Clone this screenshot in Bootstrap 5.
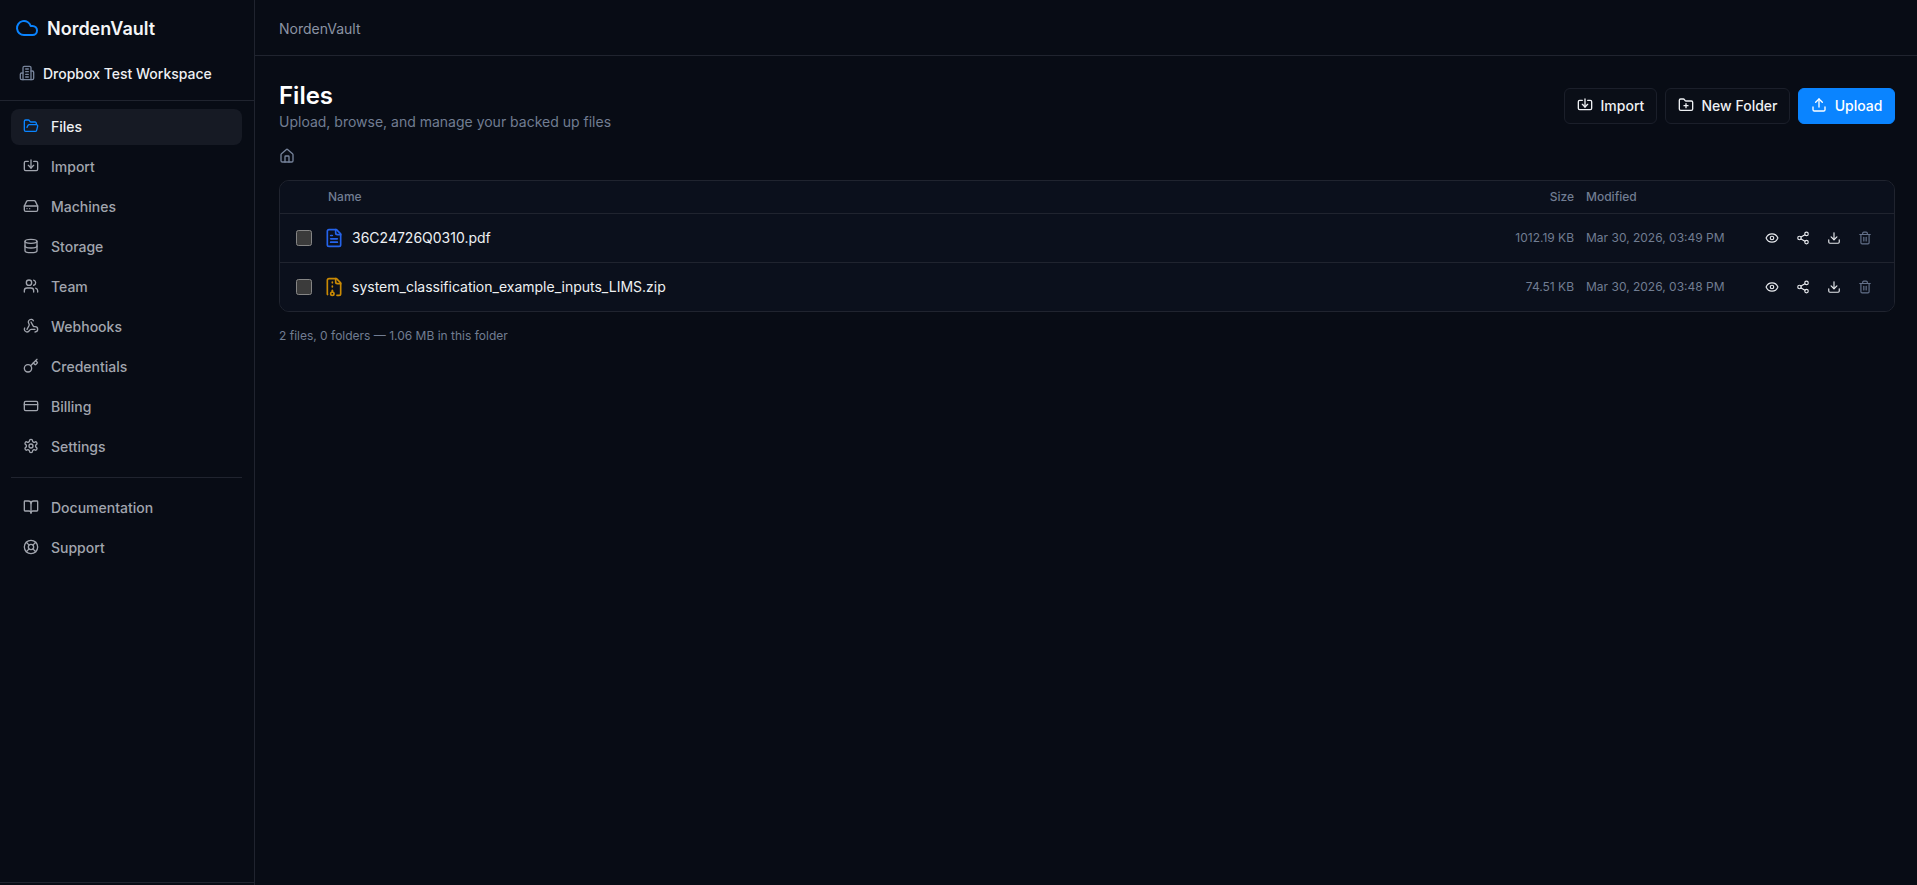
<!doctype html>
<html lang="en">
<head>
<meta charset="utf-8">
<title>NordenVault</title>
<link href="https://cdn.jsdelivr.net/npm/bootstrap@5.3.0/dist/css/bootstrap.min.css" rel="stylesheet">
<style>
html,body{height:100%;margin:0;overflow:hidden}
body{background:#080c15;color:#fff;font-family:Inter,"Liberation Sans",sans-serif;font-size:14px}
.ico{fill:none;stroke:currentColor;stroke-width:2;stroke-linecap:round;stroke-linejoin:round;flex:none}
.i16{width:16px;height:16px}.i14{width:14px;height:14px}.i20{width:20px;height:20px}.i24{width:24px;height:24px}
.shell{height:885px}
.side{width:255px;flex:none;border-right:1px solid #20242f;background:#080c15}
.brandbox{height:101px;border-bottom:1px solid #20242f;padding:16px 0 0 15px}
.brandline{height:24px;gap:8px}
.brandline .ico{color:#0a84ff}
.brandname{font-size:18px;font-weight:600;color:#f4f5f7}
.wsline{margin-top:24px;padding-left:4px;gap:8px;height:18px}
.wsline .ico{color:#76839a}
.wsname{font-size:14px;font-weight:500;color:#eef0f3}
.sidenav{padding:8px 12px 0 11px;gap:4px}
.navitem{height:36px;padding:0 12px 2px;gap:12px;border-radius:8px;color:#a1a5ae;font-weight:500;text-decoration:none}
.navitem .ico{color:#a1a5ae}
.navitem.on{background:#161a24;color:#eef0f3}
.navitem.on .ico{color:#0a84ff}
.sidesep{margin:12px 12px 12px 11px;height:1px;background:#20242f}
.sidefoot{margin-top:auto;height:3px;border-top:1px solid #20242f}
.topbar{height:56px;border-bottom:1px solid #20242f;padding:2px 22px 0 24px;color:#8b93a3}
.work{padding:24px 22px 24px 24px}
.pagehead{height:54px}
.pagetitle{font-size:24px;font-weight:600;line-height:31px;margin:0;color:#fff}
.pagesub{font-size:14px;line-height:20px;color:#717d92;margin:1px 0 0}
.actbtn{height:36px;padding:0 11.6px 2px;gap:8px;border-radius:6px;font-size:14px;font-weight:500;color:#eef0f3;background:#0a0e17;border:1px solid #1b1f2a;--bs-btn-hover-color:#fff}
.actbtn.primary{background:#0a84ff;border-color:#0a84ff;color:#fff}
.crumb{height:20px;margin-top:12px;margin-bottom:14px;color:#76839a}
.filebox{border:1px solid #20242f;border-radius:10px;overflow:hidden;background:#0b101c}
.filetable{--bs-table-bg:#0b101c;--bs-table-color:#fff;margin:0;table-layout:fixed;width:100%;border-collapse:collapse}
.filetable th{height:32px;padding:0;font-size:12px;font-weight:500;color:#717d92;border-bottom:1px solid #20242f;vertical-align:middle}
.filetable td{height:49px;padding:0;border-bottom:1px solid #20242f;vertical-align:middle;font-size:12px;color:#717d92}
.filetable tr:last-child td{border-bottom:0;height:49px}
.c1{width:44px}.c3{width:110px}.c4{width:172px}.c5{width:144px}
.filetable .tick{padding-left:16px}
.tick input{display:block;width:16px;height:16px;margin:0;color-scheme:dark}
.filetable th.namehead{padding-left:4px}
.fname{gap:8px;font-size:14px;color:#eef0f3}
.ext-doc{color:#2563eb}.ext-zip{color:#ca8a04}
.pad-r{padding-right:4px!important}
.pad-l{padding-left:8px!important}
.rowacts{gap:3px;padding-left:8px}
.rowbtn{width:28px;height:28px;padding:0;border:0;background:transparent;color:#e6e8ec;display:flex;align-items:center;justify-content:center}
.rowbtn.del{color:#64718a}
.summary{margin-top:16px;font-size:12px;line-height:16px;color:#717d92}
</style>
</head>
<body>
<svg width="0" height="0" class="position-absolute">
<defs>
<symbol id="cloud" viewBox="0 0 24 24"><path d="M17.5 19H9a7 7 0 1 1 6.71-9h1.79a4.5 4.5 0 1 1 0 9Z"/></symbol>
<symbol id="building" viewBox="0 0 24 24"><path d="M6 22V4a2 2 0 0 1 2-2h8a2 2 0 0 1 2 2v18Z"/><path d="M6 12H4a2 2 0 0 0-2 2v6a2 2 0 0 0 2 2h2"/><path d="M18 9h2a2 2 0 0 1 2 2v9a2 2 0 0 1-2 2h-2"/><path d="M10 6h4"/><path d="M10 10h4"/><path d="M10 14h4"/><path d="M10 18h4"/></symbol>
<symbol id="folderopen" viewBox="0 0 24 24"><path d="m6 14 1.5-2.9A2 2 0 0 1 9.24 10H20a2 2 0 0 1 1.94 2.5l-1.54 6a2 2 0 0 1-1.95 1.5H4a2 2 0 0 1-2-2V5a2 2 0 0 1 2-2h3.9a2 2 0 0 1 1.69.9l.81 1.2a2 2 0 0 0 1.67.9H18a2 2 0 0 1 2 2v2"/></symbol>
<symbol id="import" viewBox="0 0 24 24"><path d="M12 3v12"/><path d="m8 11 4 4 4-4"/><path d="M8 5H4a2 2 0 0 0-2 2v10a2 2 0 0 0 2 2h16a2 2 0 0 0 2-2V7a2 2 0 0 0-2-2h-4"/></symbol>
<symbol id="drive" viewBox="0 0 24 24"><path d="M22 12H2"/><path d="M5.45 5.11 2 12v6a2 2 0 0 0 2 2h16a2 2 0 0 0 2-2v-6l-3.45-6.89A2 2 0 0 0 16.76 4H7.24a2 2 0 0 0-1.79 1.11z"/><path d="M6 16h.01"/><path d="M10 16h.01"/></symbol>
<symbol id="database" viewBox="0 0 24 24"><ellipse cx="12" cy="5" rx="9" ry="3"/><path d="M3 5V19A9 3 0 0 0 21 19V5"/><path d="M3 12A9 3 0 0 0 21 12"/></symbol>
<symbol id="users" viewBox="0 0 24 24"><path d="M16 21v-2a4 4 0 0 0-4-4H6a4 4 0 0 0-4 4v2"/><circle cx="9" cy="7" r="4"/><path d="M22 21v-2a4 4 0 0 0-3-3.87"/><path d="M16 3.13a4 4 0 0 1 0 7.75"/></symbol>
<symbol id="webhook" viewBox="0 0 24 24"><path d="M18 16.98h-5.99c-1.1 0-1.95.94-2.48 1.9A4 4 0 0 1 2 17c.01-.7.2-1.4.57-2"/><path d="m6 17 3.13-5.78c.53-.97.1-2.18-.5-3.1a4 4 0 1 1 6.89-4.06"/><path d="m12 6 3.13 5.73C15.66 12.7 16.9 13 18 13a4 4 0 0 1 0 8"/></symbol>
<symbol id="key" viewBox="0 0 24 24"><path d="m15.5 7.5 2.3 2.3a1 1 0 0 0 1.4 0l2.1-2.1a1 1 0 0 0 0-1.4L19 4"/><path d="m21 2-9.6 9.6"/><circle cx="7.5" cy="15.5" r="5.5"/></symbol>
<symbol id="card" viewBox="0 0 24 24"><rect width="20" height="14" x="2" y="5" rx="2"/><path d="M2 10h20"/></symbol>
<symbol id="gear" viewBox="0 0 24 24"><path d="M12.22 2h-.44a2 2 0 0 0-2 2v.18a2 2 0 0 1-1 1.73l-.43.25a2 2 0 0 1-2 0l-.15-.08a2 2 0 0 0-2.73.73l-.22.38a2 2 0 0 0 .73 2.73l.15.1a2 2 0 0 1 1 1.72v.51a2 2 0 0 1-1 1.74l-.15.09a2 2 0 0 0-.73 2.73l.22.38a2 2 0 0 0 2.73.73l.15-.08a2 2 0 0 1 2 0l.43.25a2 2 0 0 1 1 1.73V20a2 2 0 0 0 2 2h.44a2 2 0 0 0 2-2v-.18a2 2 0 0 1 1-1.73l.43-.25a2 2 0 0 1 2 0l.15.08a2 2 0 0 0 2.73-.73l.22-.39a2 2 0 0 0-.73-2.73l-.15-.08a2 2 0 0 1-1-1.74v-.5a2 2 0 0 1 1-1.74l.15-.09a2 2 0 0 0 .73-2.73l-.22-.38a2 2 0 0 0-2.73-.73l-.15.08a2 2 0 0 1-2 0l-.43-.25a2 2 0 0 1-1-1.73V4a2 2 0 0 0-2-2z"/><circle cx="12" cy="12" r="3"/></symbol>
<symbol id="book" viewBox="0 0 24 24"><path d="M12 7v14"/><path d="M3 18a1 1 0 0 1-1-1V4a1 1 0 0 1 1-1h5a4 4 0 0 1 4 4 4 4 0 0 1 4-4h5a1 1 0 0 1 1 1v13a1 1 0 0 1-1 1h-6a3 3 0 0 0-3 3 3 3 0 0 0-3-3z"/></symbol>
<symbol id="buoy" viewBox="0 0 24 24"><circle cx="12" cy="12" r="10"/><path d="m4.93 4.93 4.24 4.24"/><path d="m14.83 9.17 4.24-4.24"/><path d="m14.83 14.83 4.24 4.24"/><path d="m9.17 14.83-4.24 4.24"/><circle cx="12" cy="12" r="4"/></symbol>
<symbol id="folderplus" viewBox="0 0 24 24"><path d="M12 10v6"/><path d="M9 13h6"/><path d="M20 20a2 2 0 0 0 2-2V8a2 2 0 0 0-2-2h-7.9a2 2 0 0 1-1.69-.9L9.6 3.9A2 2 0 0 0 7.93 3H4a2 2 0 0 0-2 2v13a2 2 0 0 0 2 2Z"/></symbol>
<symbol id="upload" viewBox="0 0 24 24"><path d="M21 15v4a2 2 0 0 1-2 2H5a2 2 0 0 1-2-2v-4"/><path d="m17 8-5-5-5 5"/><path d="M12 3v12"/></symbol>
<symbol id="house" viewBox="0 0 24 24"><path d="M15 21v-8a1 1 0 0 0-1-1h-4a1 1 0 0 0-1 1v8"/><path d="M3 10a2 2 0 0 1 .709-1.528l7-5.999a2 2 0 0 1 2.582 0l7 5.999A2 2 0 0 1 21 10v9a2 2 0 0 1-2 2H5a2 2 0 0 1-2-2z"/></symbol>
<symbol id="filetext" viewBox="0 0 24 24"><path d="M15 2H6a2 2 0 0 0-2 2v16a2 2 0 0 0 2 2h12a2 2 0 0 0 2-2V7Z"/><path d="M14 2v4a2 2 0 0 0 2 2h4"/><path d="M10 9H8"/><path d="M16 13H8"/><path d="M16 17H8"/></symbol>
<symbol id="filezip" viewBox="0 0 24 24"><path d="M10 12v-1"/><path d="M10 18v-2"/><path d="M10 7V6"/><path d="M14 2v4a2 2 0 0 0 2 2h4"/><path d="M15.5 22H18a2 2 0 0 0 2-2V7l-5-5H6a2 2 0 0 0-2 2v16a2 2 0 0 0 .274 1.01"/><circle cx="10" cy="20" r="2"/></symbol>
<symbol id="eye" viewBox="0 0 24 24"><path d="M2.062 12.348a1 1 0 0 1 0-.696 10.75 10.75 0 0 1 19.876 0 1 1 0 0 1 0 .696 10.75 10.75 0 0 1-19.876 0"/><circle cx="12" cy="12" r="3"/></symbol>
<symbol id="share" viewBox="0 0 24 24"><circle cx="18" cy="5" r="3"/><circle cx="6" cy="12" r="3"/><circle cx="18" cy="19" r="3"/><path d="m8.59 13.51 6.83 3.98"/><path d="m15.41 6.51-6.82 3.98"/></symbol>
<symbol id="download" viewBox="0 0 24 24"><path d="M21 15v4a2 2 0 0 1-2 2H5a2 2 0 0 1-2-2v-4"/><path d="m7 10 5 5 5-5"/><path d="M12 15V3"/></symbol>
<symbol id="trash" viewBox="0 0 24 24"><path d="M3 6h18"/><path d="M19 6v14c0 1-1 2-2 2H7c-1 0-2-1-2-2V6"/><path d="M8 6V4c0-1 1-2 2-2h4c1 0 2 1 2 2v2"/><path d="M10 11v6"/><path d="M14 11v6"/></symbol>
</defs>
</svg>

<div class="shell d-flex">
  <aside class="side d-flex flex-column">
    <div class="brandbox">
      <div class="brandline d-flex align-items-center"><svg class="ico i24"><use href="#cloud"/></svg><span class="brandname">NordenVault</span></div>
      <div class="wsline d-flex align-items-center"><svg class="ico i16"><use href="#building"/></svg><span class="wsname">Dropbox Test Workspace</span></div>
    </div>
    <nav class="sidenav d-flex flex-column">
      <a class="navitem on d-flex align-items-center" href="#"><svg class="ico i16"><use href="#folderopen"/></svg>Files</a>
      <a class="navitem d-flex align-items-center" href="#"><svg class="ico i16"><use href="#import"/></svg>Import</a>
      <a class="navitem d-flex align-items-center" href="#"><svg class="ico i16"><use href="#drive"/></svg>Machines</a>
      <a class="navitem d-flex align-items-center" href="#"><svg class="ico i16"><use href="#database"/></svg>Storage</a>
      <a class="navitem d-flex align-items-center" href="#"><svg class="ico i16"><use href="#users"/></svg>Team</a>
      <a class="navitem d-flex align-items-center" href="#"><svg class="ico i16"><use href="#webhook"/></svg>Webhooks</a>
      <a class="navitem d-flex align-items-center" href="#"><svg class="ico i16"><use href="#key"/></svg>Credentials</a>
      <a class="navitem d-flex align-items-center" href="#"><svg class="ico i16"><use href="#card"/></svg>Billing</a>
      <a class="navitem d-flex align-items-center" href="#"><svg class="ico i16"><use href="#gear"/></svg>Settings</a>
    </nav>
    <div class="sidesep"></div>
    <nav class="sidenav d-flex flex-column pt-0">
      <a class="navitem d-flex align-items-center" href="#"><svg class="ico i16"><use href="#book"/></svg>Documentation</a>
      <a class="navitem d-flex align-items-center" href="#"><svg class="ico i16"><use href="#buoy"/></svg>Support</a>
    </nav>
    <div class="sidefoot"></div>
  </aside>

  <main class="flex-grow-1 d-flex flex-column">
    <header class="topbar d-flex align-items-center">NordenVault</header>
    <div class="work">
      <div class="pagehead d-flex justify-content-between align-items-start">
        <div>
          <h1 class="pagetitle">Files</h1>
          <p class="pagesub">Upload, browse, and manage your backed up files</p>
        </div>
        <div class="d-flex gap-2 pt-2">
          <button class="btn actbtn d-flex align-items-center"><svg class="ico i16"><use href="#import"/></svg>Import</button>
          <button class="btn actbtn d-flex align-items-center"><svg class="ico i16"><use href="#folderplus"/></svg>New Folder</button>
          <button class="btn actbtn primary d-flex align-items-center"><svg class="ico i16"><use href="#upload"/></svg>Upload</button>
        </div>
      </div>
      <div class="crumb d-flex align-items-center"><svg class="ico i16"><use href="#house"/></svg></div>
      <div class="filebox">
        <table class="table filetable">
          <colgroup><col class="c1"><col><col class="c3"><col class="c4"><col class="c5"></colgroup>
          <thead>
            <tr><th></th><th class="namehead">Name</th><th class="text-end pad-r">Size</th><th class="pad-l">Modified</th><th></th></tr>
          </thead>
          <tbody>
            <tr>
              <td class="tick"><input type="checkbox" aria-label="Select 36C24726Q0310.pdf"></td>
              <td><div class="fname d-flex align-items-center"><svg class="ico i20 ext-doc"><use href="#filetext"/></svg>36C24726Q0310.pdf</div></td>
              <td class="text-end pad-r">1012.19 KB</td>
              <td class="pad-l">Mar 30, 2026, 03:49 PM</td>
              <td><div class="rowacts d-flex">
                <button class="rowbtn" aria-label="Preview"><svg class="ico i14"><use href="#eye"/></svg></button>
                <button class="rowbtn" aria-label="Share"><svg class="ico i14"><use href="#share"/></svg></button>
                <button class="rowbtn" aria-label="Download"><svg class="ico i14"><use href="#download"/></svg></button>
                <button class="rowbtn del" aria-label="Delete"><svg class="ico i14"><use href="#trash"/></svg></button>
              </div></td>
            </tr>
            <tr>
              <td class="tick"><input type="checkbox" aria-label="Select system_classification_example_inputs_LIMS.zip"></td>
              <td><div class="fname d-flex align-items-center"><svg class="ico i20 ext-zip"><use href="#filezip"/></svg>system_classification_example_inputs_LIMS.zip</div></td>
              <td class="text-end pad-r">74.51 KB</td>
              <td class="pad-l">Mar 30, 2026, 03:48 PM</td>
              <td><div class="rowacts d-flex">
                <button class="rowbtn" aria-label="Preview"><svg class="ico i14"><use href="#eye"/></svg></button>
                <button class="rowbtn" aria-label="Share"><svg class="ico i14"><use href="#share"/></svg></button>
                <button class="rowbtn" aria-label="Download"><svg class="ico i14"><use href="#download"/></svg></button>
                <button class="rowbtn del" aria-label="Delete"><svg class="ico i14"><use href="#trash"/></svg></button>
              </div></td>
            </tr>
          </tbody>
        </table>
      </div>
      <p class="summary mb-0">2 files, 0 folders — 1.06 MB in this folder</p>
    </div>
  </main>
</div>
<script src="https://cdn.jsdelivr.net/npm/bootstrap@5.3.0/dist/js/bootstrap.bundle.min.js"></script>
</body>
</html>
